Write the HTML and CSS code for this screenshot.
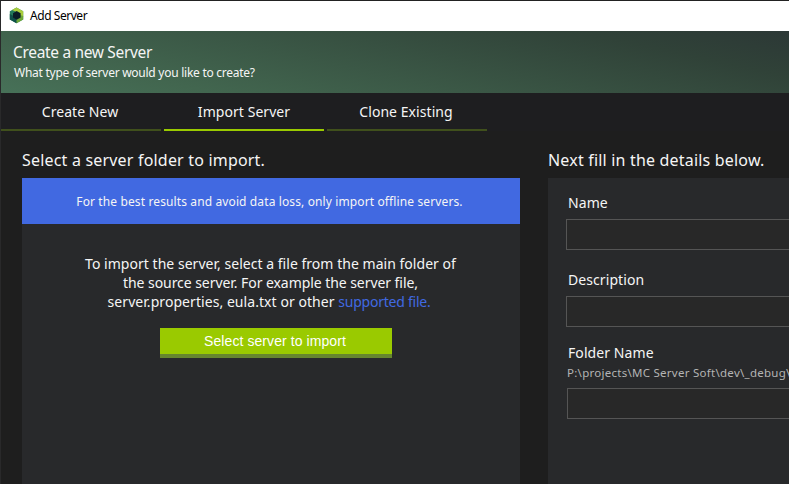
FILE: index.html
```
<!DOCTYPE html>
<html lang="en">
<head>
<meta charset="utf-8">
<title>Add Server</title>
<link rel="stylesheet" href="styles.css">
</head>
<body>
<div class="window">
  <header class="titlebar">
    <svg class="logo" width="15" height="17" viewBox="0 0 15 17">
      <path fill="#237a5a" d="M7.5 .5 14.2 4.3v8.1L7.5 16.3.8 12.4V4.3z"/>
      <path fill="#a9cd3c" d="M7.5 .5 14.2 4.3v5.4L11 10 7.5 5 3 3z"/>
      <path fill="#6fa838" d="M14.2 9v3.4L7.5 16.3 6 12l5-4z"/>
      <path fill="#0e4f48" d="M.8 7v5.4l6.7 3.9V12L3 8z"/>
      <path fill="#0a1c26" d="M7.7 3.9 11.6 6.2v4.3L7.7 12.8 4 10.5V6.2z"/>
    </svg>
    <span class="app-name">Add Server</span>
  </header>
  <section class="hero">
    <h1>Create a new Server</h1>
    <p>What type of server would you like to create?</p>
  </section>
  <nav class="tabs">
    <a class="tab">Create New</a>
    <a class="tab active">Import Server</a>
    <a class="tab">Clone Existing</a>
  </nav>
  <main class="content">
    <section class="source">
      <h2>Select a server folder to import.</h2>
      <div class="panel">
        <div class="banner">For the best results and avoid data loss, only import offline servers.</div>
        <p class="help">To import the server, select a file from the main folder of<br><span class="tight">the source server. For example the server file,</span><br><span class="files">server.properties, eula.txt or other <a>supported file.</a></span></p>
        <button class="import">Select server to import</button>
      </div>
    </section>
    <section class="details">
      <h2>Next fill in the details below.</h2>
      <div class="panel form">
        <label>Name</label>
        <div class="field"></div>
        <label class="description">Description</label>
        <div class="field"></div>
        <label class="folder">Folder Name</label>
        <div class="path">P:\projects\MC Server Soft\dev\_debug\</div>
        <div class="field folder-field"></div>
      </div>
    </section>
  </main>
</div>
</body>
</html>
```
FILE: styles.css
```
* { box-sizing: border-box; }
body { margin: 0; background: #1e1e1e; font-family: "Noto Sans", sans-serif; color: #f5f5f5; }
.window { width: 789px; height: 484px; overflow: hidden; border-top: 1px solid #222; border-left: 1px solid #29292a; }
.titlebar { height: 30px; background: #fff; color: #000; display: flex; align-items: center; padding: 0 0 2px 8px; gap: 6px; font-size: 12px; letter-spacing: -.45px; }
.hero { height: 62px; padding: 11px 12px 0; background: linear-gradient(12deg, #477158 0%, #42664f 20%, #304238 80%, #2c3836 100%); }
h1, h2, p { margin: 0; font-weight: 400; }
h1 { font-size: 15.5px; line-height: 20px; letter-spacing: -.33px; }
.hero p { font-size: 12px; line-height: 22px; padding-left: 1px; letter-spacing: -.26px; }
.tabs { height: 38px; background: #1e1e20; display: flex; gap: 3px; }
.tab { width: 160px; height: 38px; border-bottom: 2px solid #40501c; text-align: center; font-size: 14px; line-height: 38px; letter-spacing: .06px; padding-right: 2px; }
.active { border-color: #9aca00; padding-right: 0; }
.content { display: flex; gap: 28px; padding: 18px 0 0 21px; }
.source { width: 498px; flex: none; }
.details { width: 260px; flex: none; }
h2 { font-size: 16px; line-height: 22px; height: 29px; white-space: nowrap; letter-spacing: .19px; }
.panel { background: #28292b; height: 310px; }
.banner { background: #4169e1; height: 46px; line-height: 48px; text-align: center; font-size: 12px; letter-spacing: .12px; padding-right: 3px; }
.help { text-align: center; font-size: 14px; line-height: 19px; padding: 30px 1px 0 0; white-space: nowrap; letter-spacing: .03px; }
.tight { letter-spacing: -.06px; }
.files { letter-spacing: .06px; margin-right: 3px; }
.help a { color: #4169e1; letter-spacing: -.24px; }
.import { display: block; width: 232px; height: 30px; margin: 17px 0 0 138px; padding: 0 2px 0 0; border: 0; border-bottom: 4px solid #66862e; background: #9aca00; color: #fff; font: 14px "Liberation Sans", sans-serif; letter-spacing: .08px; }
.form { padding: 15px 0 0 18px; }
label { display: block; font-size: 14px; line-height: 20px; padding-left: 2px; height: 26px; letter-spacing: .08px; }
.field { height: 31px; border: 1px solid #555; background: #282828; }
.description { margin-top: 20px; }
.folder { margin-top: 16px; height: 20px; }
.path { font-size: 11.5px; line-height: 20px; padding-left: 1px; color: #b4b4b4; white-space: nowrap; letter-spacing: .27px; }
.folder-field { margin: 5px 0 0 1px; }
```
